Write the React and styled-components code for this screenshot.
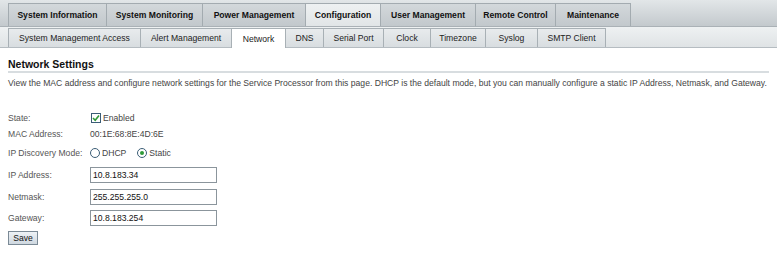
import React, { useState } from 'react';
import styled, { createGlobalStyle } from 'styled-components';

const GlobalStyle = createGlobalStyle`
  html, body {
    margin: 0;
    padding: 0;
    background: #fff;
    font-family: "Liberation Sans", Arial, sans-serif;
    font-size: 8.6px;
    color: #333;
  }
`;

// Top navigation
const MainBar = styled.div`
  display: flex;
  align-items: flex-end;
  height: 27px;
  padding-left: 8px;
  background: linear-gradient(#e2e6e8, #c3c9cd);
  border-bottom: 1px solid #aab1b6;
  box-sizing: border-box;
`;

const MainTab = styled.div`
  width: ${(p) => p.w}px;
  height: 23px;
  display: flex;
  align-items: center;
  justify-content: center;
  box-sizing: border-box;
  font-weight: bold;
  color: #111;
  white-space: nowrap;
  border: 1px solid #a3abb0;
  border-bottom: none;
  margin-right: -1px;
  background: ${(p) =>
    p.active ? 'linear-gradient(#eef1f2, #e1e5e7)' : 'linear-gradient(#d3d8db, #c2c8cc)'};
`;

const SubBar = styled.div`
  display: flex;
  align-items: flex-end;
  height: 21px;
  padding-left: 8px;
  background: linear-gradient(#eef1f2, #dfe3e5);
  border-bottom: 1px solid #b5bcc1;
  box-sizing: border-box;
`;

const SubTab = styled.div`
  width: ${(p) => p.w}px;
  height: ${(p) => (p.active ? '20px' : '19px')};
  margin-bottom: ${(p) => (p.active ? '-1px' : '0')};
  display: flex;
  align-items: center;
  justify-content: center;
  box-sizing: border-box;
  color: #222;
  white-space: nowrap;
  border: 1px solid #a8b0b5;
  border-bottom: none;
  margin-right: -1px;
  background: ${(p) => (p.active ? '#fff' : 'linear-gradient(#e8ebed, #d8dde0)')};
`;

// Content
const Content = styled.div`
  padding: 0 8px;
`;

const Heading = styled.h1`
  margin: 10px 0 0;
  padding-bottom: 1px;
  font-size: 10.5px;
  font-weight: bold;
  color: #111;
  border-bottom: 2px solid #d8dde0;
`;

const Description = styled.p`
  margin: 5px 0 0;
  color: #444;
  line-height: 11px;
  white-space: nowrap;
`;

const Form = styled.div`
  display: grid;
  grid-template-columns: 82px auto;
  margin-top: 20px;
  align-items: center;
`;

const Label = styled.div`
  color: #555;
  height: ${(p) => p.h}px;
  display: flex;
  align-items: center;
  white-space: nowrap;
`;

const Value = styled.div`
  display: flex;
  align-items: center;
  gap: 2px;
  color: #444;
  height: ${(p) => p.h}px;
`;

const Box = styled.span`
  width: 10px;
  height: 10px;
  border: 1px solid #3b5d76;
  background: #fff;
  display: inline-flex;
  align-items: center;
  justify-content: center;
  box-sizing: border-box;
  margin-left: 1px;
`;

const Radio = styled.span`
  width: 10px;
  height: 10px;
  border-radius: 50%;
  border: 1px solid #3b5d76;
  box-sizing: border-box;
  display: inline-flex;
  align-items: center;
  justify-content: center;
  background: #fff;
  &::after {
    content: '';
    width: 4px;
    height: 4px;
    border-radius: 50%;
    background: ${(p) => (p.checked ? '#2f9a38' : 'transparent')};
  }
`;

const Option = styled.label`
  display: inline-flex;
  align-items: center;
  gap: 2px;
  margin-right: 9px;
`;

const Input = styled.input`
  width: 127px;
  height: 16px;
  box-sizing: border-box;
  border: 1px solid #8b959c;
  padding: 0 2px;
  font-family: "Liberation Sans", Arial, sans-serif;
  font-size: 8.6px;
  color: #111;
`;

const SaveButton = styled.button`
  display: block;
  margin-top: 3px;
  width: 30px;
  height: 14px;
  padding: 0;
  font-family: "Liberation Sans", Arial, sans-serif;
  font-size: 8.6px;
  color: #111;
  border: 1px solid #7b8a96;
  background: linear-gradient(#eef2f6, #cfd8e0);
`;

const mainTabs = [
  ['System Information', 99],
  ['System Monitoring', 97],
  ['Power Management', 104],
  ['Configuration', 76],
  ['User Management', 96],
  ['Remote Control', 81],
  ['Maintenance', 76],
];

const subTabs = [
  ['System Management Access', 133],
  ['Alert Management', 92],
  ['Network', 55],
  ['DNS', 39],
  ['Serial Port', 61],
  ['Clock', 48],
  ['Timezone', 56],
  ['Syslog', 53],
  ['SMTP Client', 69],
];

const App = () => {
  const [ip, setIp] = useState('10.8.183.34');
  const [mask, setMask] = useState('255.255.255.0');
  const [gw, setGw] = useState('10.8.183.254');

  return (
    <>
      <GlobalStyle />
      <MainBar>
        {mainTabs.map(([t, w]) => (
          <MainTab key={t} w={w} active={t === 'Configuration'}>{t}</MainTab>
        ))}
      </MainBar>
      <SubBar>
        {subTabs.map(([t, w]) => (
          <SubTab key={t} w={w} active={t === 'Network'}>{t}</SubTab>
        ))}
      </SubBar>
      <Content>
        <Heading>Network Settings</Heading>
        <Description>
          View the MAC address and configure network settings for the Service Processor from this page. DHCP is the default mode, but you can manually configure a static IP Address, Netmask, and Gateway.
        </Description>
        <Form>
          <Label h={17}>State:</Label>
          <Value h={17}>
            <Box>
              <svg width="8" height="8" viewBox="0 0 8 8">
                <path d="M1 4 L3.2 6.2 L7 1.5" stroke="#2f9a38" strokeWidth="1.6" fill="none" />
              </svg>
            </Box>
            Enabled
          </Value>
          <Label h={16}>MAC Address:</Label>
          <Value h={16}>00:1E:68:8E:4D:6E</Value>
          <Label h={22}>IP Discovery Mode:</Label>
          <Value h={22}>
            <Option><Radio />DHCP</Option>
            <Option><Radio checked />Static</Option>
          </Value>
          <Label h={22}>IP Address:</Label>
          <Value h={22}><Input value={ip} onChange={(e) => setIp(e.target.value)} /></Value>
          <Label h={21}>Netmask:</Label>
          <Value h={21}><Input value={mask} onChange={(e) => setMask(e.target.value)} /></Value>
          <Label h={21}>Gateway:</Label>
          <Value h={21}><Input value={gw} onChange={(e) => setGw(e.target.value)} /></Value>
        </Form>
        <SaveButton>Save</SaveButton>
      </Content>
    </>
  );
};

export default App;
